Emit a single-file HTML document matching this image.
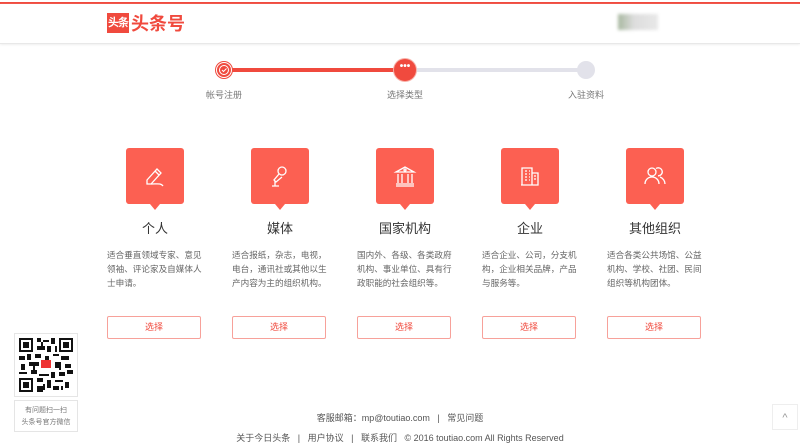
<!DOCTYPE html>
<html><head><meta charset="utf-8"><style>
*{margin:0;padding:0;box-sizing:border-box}
body{width:800px;height:444px;overflow:hidden;background:#fff;font-family:"Liberation Sans","Noto Sans CJK SC",sans-serif;position:relative;color:#333}
.topline{position:absolute;left:0;top:2px;width:800px;height:2px;background:#f04a3e}
.header{position:absolute;left:0;top:4px;width:800px;height:40px;border-bottom:1px solid #e8e8e8;box-shadow:0 1px 2px #f0f0f0}
.logo{position:absolute;left:107px;top:13px;width:22px;height:20px;background:#f04a3e;color:#fff;font-size:11px;font-weight:bold;line-height:20px;text-align:center;letter-spacing:-1px}
.logot{position:absolute;left:131px;top:10px;font-size:18px;font-weight:bold;color:#f04a3e;letter-spacing:0}
.blur{position:absolute;left:618px;top:14px;width:40px;height:16px;background:linear-gradient(90deg,#a8b8a0,#ddd 40%,#e8e8e8);filter:blur(1.5px)}
.line{position:absolute;top:68px;height:4px}
.c{position:absolute;border-radius:50%}
.lbl{position:absolute;top:88px;font-size:9px;color:#777;width:80px;text-align:center}
.card{position:absolute;top:148px;width:96px}
.ib{position:absolute;left:19px;top:0;width:58px;height:56px;background:#fc6052;border-radius:3px}
.ib:after{content:"";position:absolute;left:24px;bottom:-6px;border-left:5px solid transparent;border-right:5px solid transparent;border-top:6px solid #fc6052}
.ib svg{position:absolute;left:17px;top:16px}
.ti{position:absolute;top:70px;left:0;width:96px;text-align:center;font-size:13px;color:#333}
.de{position:absolute;top:100px;left:0;width:96px;font-size:8.6px;line-height:14px;color:#666}
.bt{position:absolute;top:168px;left:0;width:94px;height:23px;border:1px solid #f7a19a;border-radius:2px;text-align:center;line-height:21px;font-size:9px;color:#f04a3e}
.qr{position:absolute;left:14px;top:333px;width:64px;height:64px;border:1px solid #e5e5e5;padding:4px}
.qrt{position:absolute;left:14px;top:400px;width:64px;height:32px;border:1px solid #e5e5e5;font-size:7px;color:#777;text-align:center;line-height:12px;padding-top:4px}
.f{position:absolute;left:0;width:800px;text-align:center;font-size:9px;color:#555}
.top{position:absolute;left:772px;top:404px;width:26px;height:26px;border:1px solid #eee;text-align:center;color:#999;font-size:11px;line-height:26px}
</style></head><body>
<div class="topline"></div>
<div class="header"></div>
<div class="logo">头条</div><div class="logot">头条号</div>
<div class="blur"></div>
<div class="line" style="left:224px;width:181px;background:#f04a3e"></div>
<div class="line" style="left:405px;width:181px;background:#e2e2ea"></div>
<div class="c" style="left:216px;top:62px;width:16px;height:16px;background:#f04a3e;border:1px solid #fff;box-shadow:0 0 0 1px #f04a3e"><svg width="14" height="14" viewBox="0 0 14 14"><circle cx="7" cy="7" r="4.5" fill="none" stroke="#fff" stroke-width="1"/><path d="M5 7l1.5 1.5L9.5 5.5" fill="none" stroke="#fff" stroke-width="1"/></svg></div>
<div class="c" style="left:394px;top:59px;width:22px;height:22px;background:#f04a3e;box-shadow:0 0 0 1px #f8b0a8;color:#fff;font-size:10px;text-align:center;line-height:16px;font-weight:bold">•••</div>
<div class="c" style="left:577px;top:61px;width:18px;height:18px;background:#e2e2ea"></div>
<div class="lbl" style="left:184px">帐号注册</div>
<div class="lbl" style="left:365px">选择类型</div>
<div class="lbl" style="left:546px">入驻资料</div>

<div class="card" style="left:107px"><div class="ib"><svg width="24" height="24" viewBox="0 0 24 24" fill="none" stroke="#fff" stroke-width="1.3"><path d="M4 16L14 5l4 4L8 20H4z"/><path d="M12 7l4 4"/><path d="M8 20c6 0 10-1 12 2"/></svg></div><div class="ti">个人</div><div class="de">适合垂直领域专家、意见领袖、评论家及自媒体人士申请。</div><div class="bt">选择</div></div>
<div class="card" style="left:232px"><div class="ib"><svg width="24" height="24" viewBox="0 0 24 24" fill="none" stroke="#fff" stroke-width="1.3"><circle cx="14" cy="7" r="4"/><path d="M11 10l-5 6 2 2 6-5"/><path d="M7 17v5M4 22h7"/></svg></div><div class="ti">媒体</div><div class="de">适合报纸，杂志，电视，电台，通讯社或其他以生产内容为主的组织机构。</div><div class="bt">选择</div></div>
<div class="card" style="left:357px"><div class="ib"><svg width="24" height="24" viewBox="0 0 24 24" fill="none" stroke="#fff" stroke-width="1.3"><path d="M3 8l9-5 9 5z"/><path d="M5 10v9M9 10v9M15 10v9M19 10v9M3 20h18M3 22h18"/><circle cx="12" cy="6" r="1"/></svg></div><div class="ti">国家机构</div><div class="de">国内外、各级、各类政府机构、事业单位、具有行政职能的社会组织等。</div><div class="bt">选择</div></div>
<div class="card" style="left:482px"><div class="ib"><svg width="24" height="24" viewBox="0 0 24 24" fill="none" stroke="#fff" stroke-width="1.3"><path d="M4 21V4h10v17M14 9h6v12H3"/><path d="M7 7h2M11 7h1M7 10h2M11 10h1M7 13h2M11 13h1M7 16h2M11 16h1M16 12h2M16 15h2"/></svg></div><div class="ti">企业</div><div class="de">适合企业、公司，分支机构，企业相关品牌，产品与服务等。</div><div class="bt">选择</div></div>
<div class="card" style="left:607px"><div class="ib"><svg width="24" height="24" viewBox="0 0 24 24" fill="none" stroke="#fff" stroke-width="1.3"><circle cx="9" cy="8" r="4"/><path d="M2 20c0-4 3-7 7-7s7 3 7 7"/><path d="M13 4.5a4 4 0 1 1 2 7.3M17 13c3 1 5 4 5 7"/></svg></div><div class="ti">其他组织</div><div class="de">适合各类公共场馆、公益机构、学校、社团、民间组织等机构团体。</div><div class="bt">选择</div></div>

<div class="qr"><svg width="54" height="54" viewBox="0 0 27 27"><rect width="27" height="27" fill="#fff"/><g fill="#111"><rect x="0" y="0" width="7" height="7"/><rect x="20" y="0" width="7" height="7"/><rect x="0" y="20" width="7" height="7"/></g><g fill="#fff"><rect x="1" y="1" width="5" height="5"/><rect x="21" y="1" width="5" height="5"/><rect x="1" y="21" width="5" height="5"/></g><g fill="#111"><rect x="2" y="2" width="3" height="3"/><rect x="22" y="2" width="3" height="3"/><rect x="2" y="22" width="3" height="3"/><path d="M9 0h2v2H9zM12 1h3v1h-3zM16 0h2v3h-2zM9 4h4v2H9zM14 4h2v3h-2zM0 9h3v2H0zM4 8h2v3H4zM8 8h3v2H8zM13 9h2v2h-2zM17 8h3v1h-3zM21 9h4v2h-4zM1 13h2v3H1zM5 12h3v2H5zM18 12h3v3h-3zM23 13h3v2h-3zM0 17h4v1H0zM6 16h3v2H6zM16 17h2v3h-2zM20 17h3v2h-3zM24 16h3v2h-3zM9 20h3v2H9zM14 21h2v4h-2zM18 21h4v1h-4zM23 22h2v3h-2zM9 24h3v3H9zM17 24h3v2h-3zM8 12h2v2H8zM10 18h5v1h-5zM11 2h1v2h-1zM18 4h1v3h-1zM7 14h1v2H7zM20 14h1v2h-1zM12 23h1v3h-1zM21 24h1v2h-1z"/></g><rect x="11" y="11" width="5" height="4" fill="#e33"/></svg></div>
<div class="qrt">有问题扫一扫<br>头条号官方微信</div>
<div class="f" style="top:411px">客服邮箱：mp@toutiao.com &nbsp; | &nbsp; 常见问题</div>
<div class="f" style="top:431px">关于今日头条 &nbsp; | &nbsp; 用户协议 &nbsp; | &nbsp; 联系我们 &nbsp; © 2016 toutiao.com All Rights Reserved</div>
<div class="top">^</div>
</body></html>
